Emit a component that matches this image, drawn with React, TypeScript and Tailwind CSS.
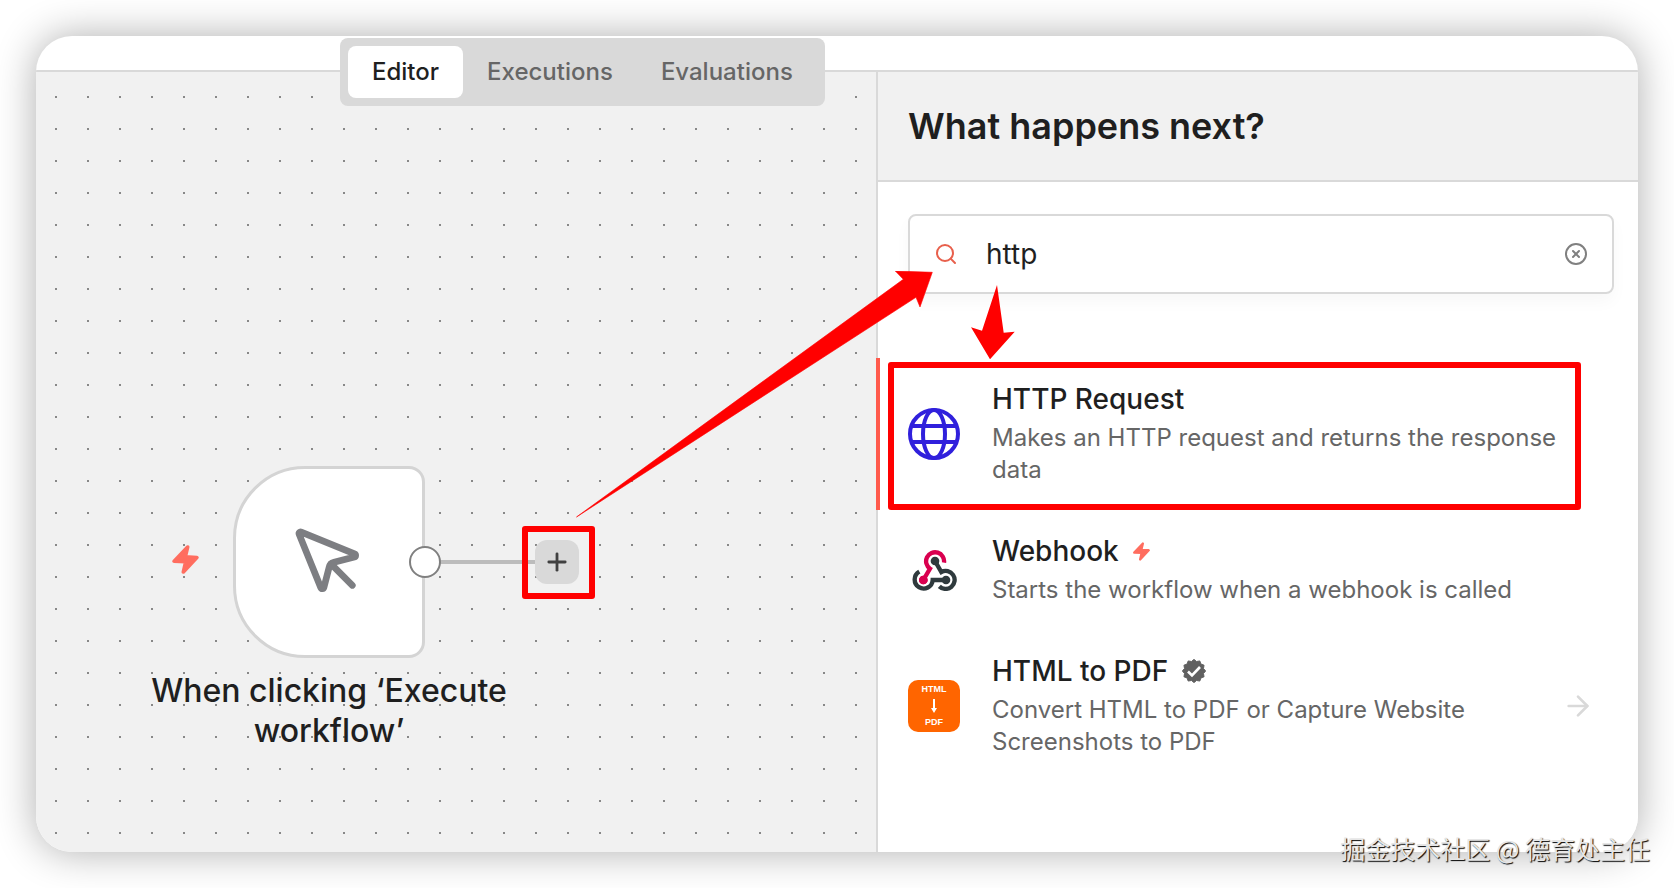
import { useState } from 'react';
import type { ReactNode } from 'react';
import clsx from 'clsx';
import { ArrowRight, CircleX, MousePointer, Plus, Search } from 'lucide-react';

const tabs = ['Editor', 'Executions', 'Evaluations'];

function BoltIcon({ className }: { className?: string }) {
  return (
    <svg className={className} viewBox="0 0 81 88" fill="#ff6d5f" stroke="#ff6d5f" strokeWidth="11" strokeLinejoin="round">
      <path d="M47 6 6 49l35 2-7 31 41-44-35-2z" />
    </svg>
  );
}

function GlobeIcon() {
  return (
    <svg className="size-13" viewBox="0 0 52 52" fill="none" stroke="#3020dc" strokeWidth="4">
      <circle cx="26" cy="26" r="24" />
      <ellipse cx="26" cy="26" rx="11" ry="24" />
      <path d="M3 18h46M3 34h46" />
    </svg>
  );
}

function WebhookIcon() {
  return (
    <svg className="h-[41px] w-[45px]" viewBox="0 0 135 123" fill="none" strokeWidth="13">
      <path d="M96 38A27 27 0 1 0 54 56L34 90" stroke="#d9004f" />
      <circle cx="34" cy="90" r="13" fill="#d9004f" />
      <g stroke="#2f3a3d">
        <path d="M69 33l19 33A27 27 0 1 1 82 109" />
        <path d="M102 90H62A27 27 0 1 1 22 65" />
      </g>
      <circle cx="69" cy="33" r="13" fill="#2f3a3d" />
      <circle cx="102" cy="90" r="13" fill="#2f3a3d" />
      <circle cx="34" cy="90" r="13" fill="#d9004f" />
    </svg>
  );
}

function HtmlPdfIcon() {
  return (
    <div className="flex size-13 flex-col items-center justify-between rounded-[10px] bg-[#ff6500] py-[5px] font-['Liberation_Sans',sans-serif] text-[9px] leading-[9px] font-bold text-white">
      <span>HTML</span>
      <svg className="h-[14px] w-[6px]" viewBox="0 0 6 14" fill="#fff">
        <path d="M2 0h2v9h2l-3 5-3-5h2z" />
      </svg>
      <span>PDF</span>
    </div>
  );
}

// twelve-pointed seal
const sealPoints = Array.from({ length: 24 }, (_, i) => {
  const r = i % 2 ? 9.8 : 11.6;
  const a = (i * Math.PI) / 12;
  return `${(12 + r * Math.cos(a)).toFixed(2)},${(12 + r * Math.sin(a)).toFixed(2)}`;
}).join(' ');

function VerifiedIcon() {
  return (
    <svg className="size-6" viewBox="0 0 24 24" fill="#606060" stroke="#606060" strokeLinejoin="round">
      <polygon points={sealPoints} />
      <path d="m6 12.5 4 4 8-8.5" fill="none" stroke="#fff" strokeWidth="2.6" strokeLinejoin="miter" />
    </svg>
  );
}

interface NodeItem {
  name: string;
  description: string;
  icon: ReactNode;
  badge?: ReactNode;
  hasActions?: boolean;
}

const items: NodeItem[] = [
  { name: 'HTTP Request', description: 'Makes an HTTP request and returns the response data', icon: <GlobeIcon /> },
  {
    name: 'Webhook',
    description: 'Starts the workflow when a webhook is called',
    icon: <WebhookIcon />,
    badge: <BoltIcon className="h-[19px] w-[17px]" />,
  },
  {
    name: 'HTML to PDF',
    description: 'Convert HTML to PDF or Capture Website Screenshots to PDF',
    icon: <HtmlPdfIcon />,
    badge: <VerifiedIcon />,
    hasActions: true,
  },
];

function Canvas() {
  return (
    <main className="relative min-w-0 flex-1 overflow-hidden bg-[#f1f1f1] bg-[radial-gradient(circle_at_20px_25px,#888_1px,transparent_1px)] bg-size-[32px_32px]">
      <BoltIcon className="absolute top-[473px] left-[136px] h-[29px] w-[27px]" />

      {/* Trigger node */}
      <div className="absolute top-[394px] left-[197px] flex size-48 items-center justify-center rounded-l-[72px] rounded-r-2xl border-3 border-[#d4d4d4] bg-white">
        <MousePointer className="size-20 text-[#7d7e82]" />
      </div>
      <p className="absolute top-[599px] left-[93px] w-[400px] text-center text-[32px] leading-10 font-medium text-[#1f1f1f]">
        When clicking ‘Execute workflow’
      </p>

      {/* Connection */}
      <div className="absolute top-[488px] left-[404px] h-1 w-24 bg-[#bcbcbc]" />
      <div className="absolute top-[474px] left-[373px] size-8 rounded-full border-2 border-[#808080] bg-white" />
      <button aria-label="Add node" className="absolute top-[468px] left-[499px] flex size-11 items-center justify-center rounded-xl bg-[#d9d9d9] text-[#404040]">
        <Plus className="size-7" strokeWidth={2.4} />
      </button>
      <div className="pointer-events-none absolute top-[454px] left-[486px] size-[73px] rounded-[3px] border-6 border-[#ff0000]" />
    </main>
  );
}

function NodeRow({ item, active }: { item: NodeItem; active: boolean }) {
  return (
    <li className="relative">
      {active && <div className="absolute inset-y-0 -left-0.5 w-1 bg-[#ff5a4c]" />}
      <button className="flex w-full items-center gap-8 py-6 pr-11 pl-[30px] text-left">
        <span className="flex w-13 shrink-0 justify-center">{item.icon}</span>
        <span className="flex flex-1 flex-col gap-1.5">
          <span className="flex items-center gap-3.5 text-[28px] leading-[34px] font-medium text-[#1f1f1f]">
            {item.name}
            {item.badge}
          </span>
          <span className="max-w-[570px] text-2xl leading-8 text-[#666]">{item.description}</span>
        </span>
        {item.hasActions && <ArrowRight className="size-8 shrink-0 text-[#d9d9d9]" />}
      </button>
      {active && <div className="pointer-events-none absolute top-1 right-[57px] bottom-0 left-2.5 rounded-[3px] border-6 border-[#ff0000]" />}
    </li>
  );
}

function NodeCreator() {
  const [query, setQuery] = useState('http');

  return (
    <aside className="relative w-[762px] shrink-0 border-l-2 border-[#d9d9d9] bg-white">
      <header className="flex h-[110px] items-center border-b-2 border-[#d9d9d9] bg-[#f1f1f1] pl-[30px]">
        <h2 className="text-4xl font-semibold text-[#1f1f1f]">What happens next?</h2>
      </header>

      <label className="mt-8 mr-6 ml-[30px] flex h-20 items-center gap-7 rounded-lg border-2 border-[#d9d9d9] px-6 shadow-[0_8px_16px_rgba(0,0,0,0.03)]">
        <Search className="size-6 shrink-0 text-[#e8604c]" />
        <input
          aria-label="Search nodes"
          value={query}
          onChange={(e) => setQuery(e.target.value)}
          className="min-w-0 flex-1 bg-transparent text-[28px] text-[#1f1f1f] outline-none"
        />
        <button aria-label="Clear search" onClick={() => setQuery('')}>
          <CircleX className="size-6 text-[#808080]" />
        </button>
      </label>

      <ul className="mt-16">
        {items.map((item, i) => (
          <NodeRow key={item.name} item={item} active={i === 0} />
        ))}
      </ul>

      {/* Step arrows */}
      <svg className="pointer-events-none absolute top-[199px] left-[-302px] h-[247px] w-[357px]" viewBox="0 0 357 247" fill="#ff0000" stroke="#ff0000" strokeWidth="0.6">
        <path d="M0.5 246 327.3 8.3 319.3 0l37 1.3L344 36l-4-9.7z" />
      </svg>
      <svg className="pointer-events-none absolute top-[213px] left-[93px] h-[75px] w-[44px]" viewBox="0 0 44 75" fill="#ff0000">
        <path d="M26 0 32.7 47.7 43.7 46.7 19 74.3 0 42.3 11 45.7z" />
      </svg>
    </aside>
  );
}

export default function App() {
  const [tab, setTab] = useState('Editor');

  return (
    <div className="relative flex min-h-screen bg-white p-9 font-['Inter',sans-serif]">
      <div className="relative flex min-w-0 flex-1 flex-col overflow-hidden rounded-[36px] bg-white shadow-[0_0_40px_rgba(0,0,0,0.32)]">
        <div className="h-9 shrink-0 border-b-2 border-[#d9d9d9]" />
        <div className="flex flex-1">
          <Canvas />
          <NodeCreator />
        </div>

        {/* View switch, floats over the header edge */}
        <nav className="absolute top-0.5 left-[304px] flex rounded-lg bg-[#d9d9d9] p-2">
          {tabs.map((name) => (
            <button
              key={name}
              onClick={() => setTab(name)}
              className={clsx(
                'h-13 rounded-lg px-6 text-2xl font-medium',
                tab === name ? 'bg-white text-[#1f1f1f]' : 'text-[#666]',
              )}
            >
              {name}
            </button>
          ))}
        </nav>
      </div>

      <p className="absolute right-6 bottom-[22px] font-['Noto_Sans_CJK_SC',sans-serif] text-[25px] leading-9 text-[#e6e6e6] [text-shadow:1px_1px_1px_#000]">
        掘金技术社区 @ 德育处主任
      </p>
    </div>
  );
}
